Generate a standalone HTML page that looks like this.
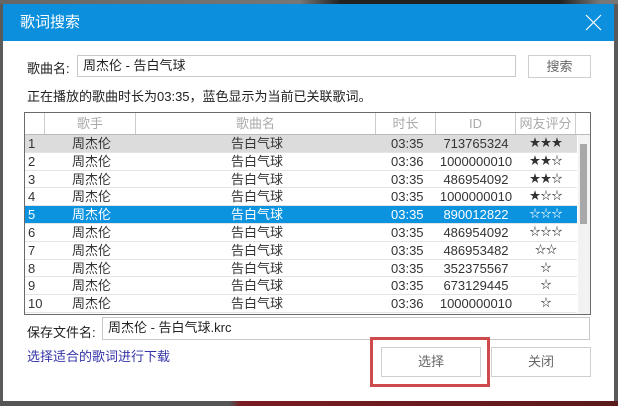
<!DOCTYPE html>
<html><head><meta charset="utf-8"><style>
*{margin:0;padding:0;box-sizing:border-box}
body{width:618px;height:406px;overflow:hidden;background:#5a5a5a;font-family:"Liberation Sans","Noto Sans CJK SC",sans-serif;font-size:13px;color:#222;position:relative}
.bgtop{position:absolute;left:0;top:0;width:618px;height:4px;background:linear-gradient(90deg,#666 0,#777 300px,#222 340px,#222 560px,#777 600px)}
.bgbot{position:absolute;left:0;top:401px;width:618px;height:5px;background:linear-gradient(90deg,#555 0,#555 230px,#7a1c22 240px,#5a1a1c 618px)}
.dlg{position:absolute;left:3px;top:4px;width:611px;height:397px;background:#fff}
.title{position:absolute;left:0;top:0;width:611px;height:37px;background:#0c8fdc;color:#fff;font-size:15px;line-height:37px;padding-left:17px}
.x{position:absolute;right:12px;top:10px;width:17px;height:17px}
.a{position:absolute;white-space:nowrap}
.inp{position:absolute;border:1px solid #c8c8c8;background:#fff;padding-left:5px;line-height:20px}
.btn{position:absolute;border:1px solid #cfcfcf;background:#fff;text-align:center;color:#666}
.tbl{position:absolute;left:21px;top:108px;width:567px;height:203px;border:1px solid #6a6a6a;overflow:hidden}
.hd{position:absolute;left:0;top:0;height:22px;width:565px;border-bottom:1px solid #bbb;color:#aaa;font-size:13px}
.hd div{position:absolute;top:0;height:21px;line-height:21px;text-align:center;border-right:1px solid #ccc}
.row{position:absolute;left:0;width:552px;height:17.8px;line-height:17.6px;border-bottom:1px solid #e4e4e4;color:#333}
.row span{position:absolute;top:0}
.sel{background:#0c93e0;color:#fff}
.g{background:#dcdcdc}
</style></head><body>
<div class="bgtop"></div><div class="bgbot"></div>
<div class="dlg">
<div class="title">歌词搜索</div>
<svg class="x" viewBox="0 0 17 17"><path d="M1 1L16 16M16 1L1 16" stroke="#fff" stroke-width="1.2"/></svg>
<div class="a" style="left:24px;top:54px">歌曲名:</div>
<div class="inp" style="left:74px;top:51px;width:439px;height:22px">周杰伦 - 告白气球</div>
<div class="btn" style="left:525px;top:51px;width:63px;height:23px;line-height:21px">搜索</div>
<div class="a" style="left:24px;top:82px">正在播放的歌曲时长为03:35，蓝色显示为当前已关联歌词。</div>
<div class="tbl">
<div class="hd">
<div style="left:0;width:20px"></div>
<div style="left:20px;width:91px">歌手</div>
<div style="left:111px;width:240px">歌曲名</div>
<div style="left:351px;width:60px">时长</div>
<div style="left:411px;width:80px">ID</div>
<div style="left:491px;width:60px">网友评分</div>
</div>
<div style="position:absolute;left:553px;top:22px;width:13px;height:180px;background:#f2f2f2"></div>
<div style="position:absolute;left:555px;top:31px;width:7px;height:80px;background:#a8a8a8"></div>
<div id="rows"></div>
</div>
<div class="a" style="left:24px;top:318px">保存文件名:</div>
<div class="inp" style="left:99px;top:313px;width:488px;height:23px">周杰伦 - 告白气球.krc</div>
<div class="a" style="left:24px;top:342px;color:#3434a8">选择适合的歌词进行下载</div>
<div class="btn" style="left:378px;top:343px;width:100px;height:30px;line-height:28px">选择</div>
<div class="btn" style="left:488px;top:343px;width:100px;height:30px;line-height:28px">关闭</div>
<div style="position:absolute;left:367px;top:333px;width:120px;height:50px;border:3px solid #cf4b4b"></div>
</div>
<script>
var d=[["1","03:35","713765324","★★★"],["2","03:36","1000000010","★★☆"],["3","03:35","486954092","★★☆"],["4","03:35","1000000010","★☆☆"],["5","03:35","890012822","☆☆☆"],["6","03:35","486954092","☆☆☆"],["7","03:35","486953482","☆☆"],["8","03:35","352375567","☆"],["9","03:35","673129445","☆"],["10","03:36","1000000010","☆"]];
var h="";d.forEach(function(r,i){var c=i==0?"row g":i==4?"row sel":"row";
h+='<div class="'+c+'" style="top:'+(22+i*17.8)+'px"><span style="left:3px">'+r[0]+'</span><span style="left:47px">周杰伦</span><span style="left:206px">告白气球</span><span style="left:366px">'+r[1]+'</span><span style="left:411px;width:80px;text-align:center">'+r[2]+'</span><span style="left:491px;width:60px;text-align:center;font-size:11px">'+r[3]+'</span></div>';});
document.getElementById("rows").innerHTML=h;
</script>
</body></html>
